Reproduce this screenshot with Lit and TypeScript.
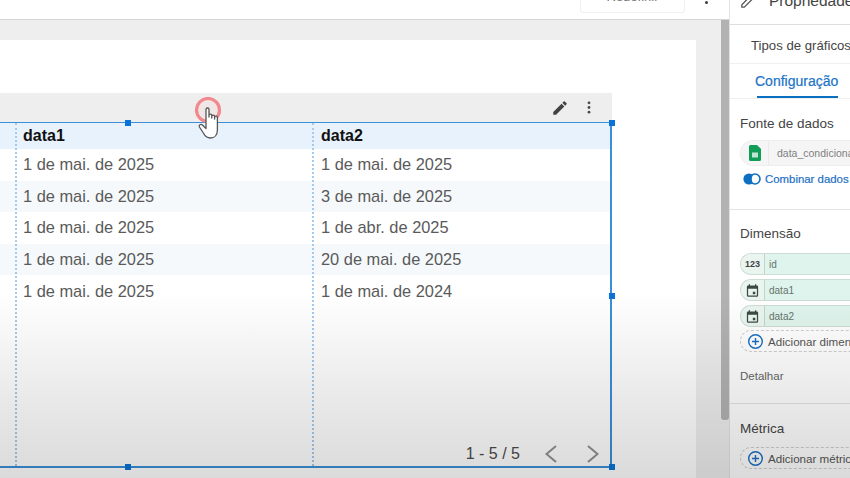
import { LitElement, html, css, svg } from "lit";
import { customElement } from "lit/decorators.js";

const rows = [
  ["1 de mai. de 2025", "1 de mai. de 2025"],
  ["1 de mai. de 2025", "3 de mai. de 2025"],
  ["1 de mai. de 2025", "1 de abr. de 2025"],
  ["1 de mai. de 2025", "20 de mai. de 2025"],
  ["1 de mai. de 2025", "1 de mai. de 2024"],
];

const calendar = svg`<svg viewBox="0 0 24 24" width="15" height="15"><path fill="#3c4a44" d="M19 4h-1V2h-2v2H8V2H6v2H5a2 2 0 0 0-2 2v14a2 2 0 0 0 2 2h14a2 2 0 0 0 2-2V6a2 2 0 0 0-2-2zm0 16H5V9h14v11z"/><rect x="12.5" y="14" width="4" height="4" fill="#3c4a44"/></svg>`;
const plus = svg`<svg viewBox="0 0 24 24" width="17" height="17"><circle cx="12" cy="12" r="9.6" fill="none" stroke="#1a6fc4" stroke-width="2"/><path d="M12 7v10M7 12h10" stroke="#1a6fc4" stroke-width="2"/></svg>`;

@customElement("app-root")
export class AppRoot extends LitElement {
  static styles = css`
    :host { display: block; width: 850px; height: 478px; overflow: hidden; position: relative; background: #fff; font-family: "Liberation Sans", Arial, sans-serif; }
    .app { display: grid; grid-template-columns: 729px 121px; height: 478px; }
    .main { display: flex; flex-direction: column; min-width: 0; }
    .topbar { height: 19px; flex: none; display: flex; align-items: flex-start; justify-content: flex-end; padding-right: 21px; gap: 20px; border-bottom: 1px solid #d4d4d4; overflow: hidden; background: #fff; }
    .reset { width: 105px; height: 13px; box-sizing: border-box; border: 1px solid #f0f0f0; border-top: 0; border-radius: 0 0 3px 3px; display: flex; justify-content: center; align-items: flex-start; overflow: hidden; font-size: 13px; line-height: 12px; color: #777; }
    .reset span { margin-top: -9px; }
    .dots { display: flex; flex-direction: column; gap: 3px; margin-top: -5px; }
    .dots i { display: block; width: 3px; height: 3px; border-radius: 50%; background: #3c3c3c; }
    .canvaswrap { flex: 1; display: grid; grid-template-columns: 721px 8px; min-height: 0; }
    .canvas { background: #eeeeee; padding-top: 20px; padding-right: 25px; }
    .page { background: #fff; height: 100%; padding-top: 53px; box-sizing: border-box; }
    .scroll { background: #eeeeee; }
    .thumb { height: 400px; background: #b2b2b2; border-radius: 0 0 3px 3px; }
    .chart { width: 612px; }
    .tools { height: 29px; background: #eeeeee; display: flex; align-items: center; justify-content: flex-end; gap: 18px; padding-right: 21px; box-sizing: border-box; }
    .tbl { position: relative; height: 346px; box-sizing: border-box; border-style: solid; border-color: #3b8fd6; border-width: 1.5px 2px 2px 0; background: #fff; }
    .tr { display: grid; grid-template-columns: 16px 297px 1fr; font-size: 16.4px; color: #5a5a5a; }
    .tr > div { padding-left: 7px; white-space: nowrap; display: flex; align-items: center; }
    .tr > div:first-child { padding: 0; }
    .tr > div:last-child { padding-left: 8px; }
    .head { height: 26px; background: #e8f2fc; color: #111; font-weight: 700; font-size: 16px; }
    .row { height: 31.6px; }
    .row.alt { background: #f5f9fc; }
    .guide { position: absolute; top: 0; bottom: 0; width: 0; border-left: 2px dotted #a3cbee; }
    .g1 { left: 15px; }
    .g2 { left: 312px; }
    .h { position: absolute; width: 6px; height: 6px; background: #0a73d9; }
    .pager { position: absolute; right: 11px; bottom: 0; display: flex; align-items: center; font-size: 16px; color: #4a4a4a; height: 24px; }
    .pager svg { display: block; }
    .pager .prev { margin-left: 25px; }
    .pager .next { margin-left: 30px; }
    .panel { border-left: 1px solid #e2e2e2; background: #fff; min-width: 0; overflow: hidden; font-size: 12px; color: #444; }
    .ptitle { height: 25px; box-sizing: border-box; border-bottom: 1px solid #dedede; display: flex; align-items: flex-end; gap: 13px; padding: 0 0 14px 9px; font-size: 15.5px; color: #444; white-space: nowrap; }
    .ptitle svg { flex: none; }
    .ptypes { height: 39px; box-sizing: border-box; border-bottom: 1px solid #f0f0f0; padding: 14px 0 0 21px; font-size: 13.2px; line-height: 14px; color: #444; white-space: nowrap; }
    .ptab { height: 35px; box-sizing: border-box; border-bottom: 1px solid #efefef; position: relative; padding: 10px 0 0 25px; font-size: 14px; line-height: 15px; color: #1a73c8; -webkit-text-stroke: 0.2px #1a73c8; white-space: nowrap; }
    .ptab::after { content: ""; position: absolute; left: 27px; bottom: 0; width: 81px; height: 2px; background: #0b6fc2; }
    .sec { padding: 0 0 0 10px; border-bottom: 1px solid #e3e3e3; box-sizing: border-box; white-space: nowrap; }
    .s1 { height: 111px; padding-top: 17px; }
    .s2 { height: 194px; padding-top: 16px; }
    .s3 { padding-top: 17px; border: 0; }
    .lbl { font-size: 13.5px; line-height: 15px; color: #444; }
    .src { margin-top: 9px; height: 26px; width: 140px; box-sizing: border-box; border: 1px solid #eeeeee; border-right: 0; border-radius: 13px 0 0 13px; background: #f5f5f5; display: flex; align-items: center; font-size: 10.5px; color: #808080; }
    .src .ic { width: 27px; display: flex; justify-content: center; border-right: 1px solid #eaeaea; height: 100%; align-items: center; flex: none; }
    .src .t { padding-left: 8px; }
    .comb { margin-top: 6px; margin-left: 3px; display: flex; align-items: center; gap: 4px; font-size: 11.4px; line-height: 14px; color: #1a6fc4; -webkit-text-stroke: 0.2px #1a6fc4; height: 14px; }
    .chips { display: flex; flex-direction: column; gap: 4px; margin-top: 12px; }
    .chip { height: 22px; width: 140px; box-sizing: border-box; border: 1px solid #cddcd5; border-right: 0; border-radius: 11px 0 0 11px; background: #dff4ec; display: flex; align-items: center; font-size: 10px; color: #66736d; }
    .chip .ic { width: 23px; flex: none; height: 100%; display: flex; align-items: center; justify-content: center; border-right: 1px solid #c4d4cc; background: #eaf5f0; border-radius: 11px 0 0 11px; font-size: 9px; font-weight: 700; color: #444; }
    .chip .t { padding-left: 4px; }
    .add { height: 22px; width: 140px; box-sizing: border-box; border: 1px dashed #cfcfcf; border-right: 0; border-radius: 11px 0 0 11px; display: flex; align-items: center; gap: 4px; padding-left: 6px; font-size: 11.6px; color: #555; }
    .s2 .add { margin-top: -1px; }
    .detail { margin-top: 17px; font-size: 11.5px; line-height: 14px; color: #666; }
    .s3 .add { margin-top: 11px; }
    .fade { position: absolute; left: 0; right: 0; top: 292px; bottom: 0; background: linear-gradient(to bottom, rgba(0,0,0,0), rgba(0,0,0,0.09) 60%, rgba(0,0,0,0.145)); pointer-events: none; }
    .cursor { position: absolute; left: 195px; top: 97px; width: 28px; height: 42px; pointer-events: none; }
    .cursor svg { display: block; }
  `;

  render() {
    return html`
      <div class="app">
        <div class="main">
          <div class="topbar">
            <div class="reset"><span>Redefinir</span></div>
            <div class="dots"><i></i><i></i></div>
          </div>
          <div class="canvaswrap">
            <div class="canvas">
              <div class="page">
                <div class="chart">
                  <div class="tools">
                    <svg viewBox="0 0 24 24" width="18" height="18"><path fill="#424242" d="M3 17.25V21h3.75L17.81 9.94l-3.75-3.75L3 17.25zM20.71 7.04a1 1 0 0 0 0-1.41l-2.34-2.34a1 1 0 0 0-1.41 0l-1.83 1.83 3.75 3.75 1.83-1.83z"/></svg>
                    <svg viewBox="0 0 4 14" width="4" height="13"><circle cx="2" cy="2" r="1.5" fill="#4a4a4a"/><circle cx="2" cy="7" r="1.5" fill="#4a4a4a"/><circle cx="2" cy="12" r="1.5" fill="#4a4a4a"/></svg>
                  </div>
                  <div class="tbl">
                    <div class="tr head"><div></div><div>data1</div><div>data2</div></div>
                    ${rows.map((r, i) => html`<div class="tr row ${i % 2 ? "alt" : ""}"><div></div><div>${r[0]}</div><div>${r[1]}</div></div>`)}
                    <div class="guide g1"></div>
                    <div class="guide g2"></div>
                    <div class="h" style="left:125px;top:-3px"></div>
                    <div class="h" style="left:609px;top:-3px"></div>
                    <div class="h" style="left:609px;top:170px"></div>
                    <div class="h" style="left:125px;bottom:-4px"></div>
                    <div class="h" style="left:609px;bottom:-4px"></div>
                    <div class="pager">
                      <span>1 - 5 / 5</span>
                      <svg class="prev" width="12" height="18" viewBox="0 0 12 18"><path d="M11 1 1.5 9l9.5 8" fill="none" stroke="#909090" stroke-width="2"/></svg>
                      <svg class="next" width="12" height="18" viewBox="0 0 12 18"><path d="M1 1l9.5 8L1 17" fill="none" stroke="#909090" stroke-width="2"/></svg>
                    </div>
                  </div>
                </div>
              </div>
            </div>
            <div class="scroll"><div class="thumb"></div></div>
          </div>
        </div>
        <aside class="panel">
          <div class="ptitle">
            <svg viewBox="0 0 24 24" width="17" height="17"><path fill="none" stroke="#555" stroke-width="1.8" d="M4 20v-3.5L16.5 4 20 7.5 7.5 20z"/></svg>
            <span>Propriedades</span>
          </div>
          <div class="ptypes">Tipos de gráficos</div>
          <div class="ptab">Configuração</div>
          <div class="sec s1">
            <div class="lbl">Fonte de dados</div>
            <div class="src">
              <div class="ic"><svg viewBox="0 0 12 16" width="12" height="16"><path fill="#0f9d58" d="M1.5 0H8l4 4v10.5a1.5 1.5 0 0 1-1.5 1.5h-9A1.5 1.5 0 0 1 0 14.5v-13A1.5 1.5 0 0 1 1.5 0z"/><rect x="3" y="7.5" width="6" height="5" fill="#bfe6d2"/></svg></div>
              <div class="t">data_condicional</div>
            </div>
            <div class="comb">
              <svg viewBox="0 0 18 12" width="18" height="12"><circle cx="12" cy="6" r="5" fill="#fff" stroke="#0b6fc2" stroke-width="1.6"/><circle cx="6" cy="6" r="5.6" fill="#0b6fc2"/><ellipse cx="11.4" cy="6" rx="2.6" ry="3.9" fill="#fff"/></svg>
              <span>Combinar dados</span>
            </div>
          </div>
          <div class="sec s2">
            <div class="lbl">Dimensão</div>
            <div class="chips">
              <div class="chip"><div class="ic">123</div><div class="t">id</div></div>
              <div class="chip"><div class="ic">${calendar}</div><div class="t">data1</div></div>
              <div class="chip"><div class="ic">${calendar}</div><div class="t">data2</div></div>
              <div class="add">${plus}<span>Adicionar dimensão</span></div>
            </div>
            <div class="detail">Detalhar</div>
          </div>
          <div class="sec s3">
            <div class="lbl">Métrica</div>
            <div class="add">${plus}<span>Adicionar métrica</span></div>
          </div>
        </aside>
      </div>
      <div class="fade"></div>
      <div class="cursor">
        <svg viewBox="0 0 28 42" width="28" height="42">
          <circle cx="13" cy="13" r="11.5" fill="rgba(250,170,170,0.12)" stroke="#f2888c" stroke-width="3.2"/>
          <path transform="translate(2 2)" d="M9 17V10.5a1.5 1.5 0 0 1 3 0V18V16.5a1.4 1.4 0 0 1 2.8 0V19V17.5a1.4 1.4 0 0 1 2.8 0V20V18.5a1.4 1.4 0 0 1 2.8 0V31c0 5-3 8-7 8-3.5 0-5.5-2-7-5l-4-6c-1-2 1.5-3.5 3-2l3.6 3.5z" fill="#fff" stroke="#555" stroke-width="1.3" stroke-linejoin="round"/>
        </svg>
      </div>
    `;
  }
}
